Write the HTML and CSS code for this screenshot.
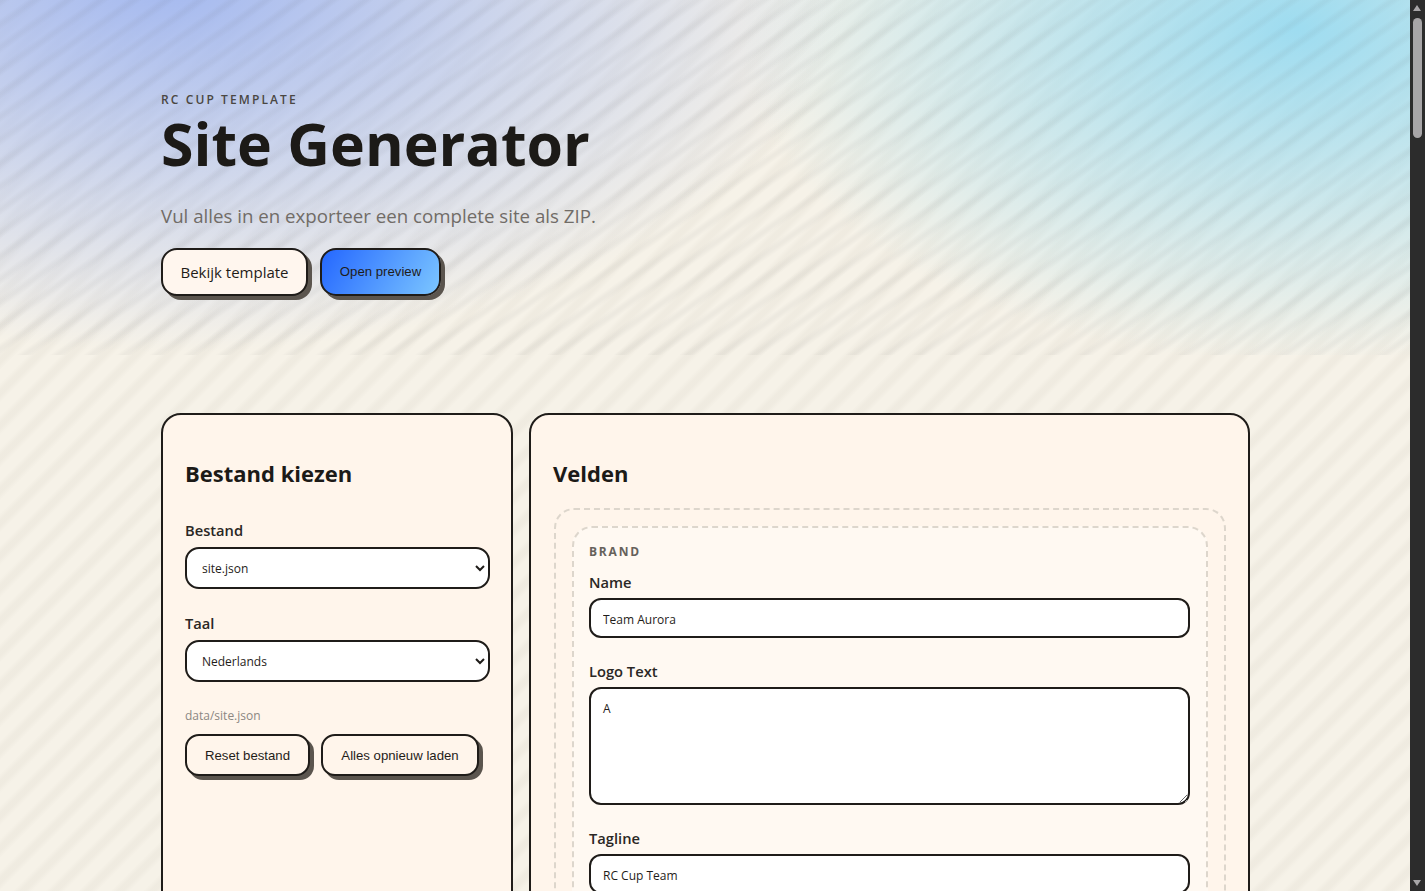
FILE: index.html
```html
<!DOCTYPE html>
<html lang="nl">
<head>
<meta charset="utf-8">
<title>Site Generator</title>
<link rel="stylesheet" href="styles.css">
</head>
<body>
<div class="viewport">
  <main class="page">
    <header class="hero">
      <div class="hero-inner">
        <p class="eyebrow">RC CUP TEMPLATE</p>
        <h1>Site Generator</h1>
        <p class="lead">Vul alles in en exporteer een complete site als ZIP.</p>
        <div class="actions">
          <a class="btn btn-link" href="#">Bekijk template</a>
          <button class="btn btn-primary" type="button">Open preview</button>
        </div>
      </div>
    </header>
    <div class="layout">
      <section class="card">
        <h2>Bestand kiezen</h2>
        <label class="field">
          <span class="label">Bestand</span>
          <select class="control select"><option>site.json</option></select>
        </label>
        <label class="field">
          <span class="label">Taal</span>
          <select class="control select"><option>Nederlands</option></select>
        </label>
        <p class="path">data/site.json</p>
        <div class="tools">
          <button class="btn btn-small" type="button">Reset bestand</button>
          <button class="btn btn-small" type="button">Alles opnieuw laden</button>
        </div>
      </section>
      <section class="card">
        <h2>Velden</h2>
        <div class="group-outer">
          <div class="group-inner">
            <p class="group-title">BRAND</p>
            <label class="field-wide">
              <span class="label">Name</span>
              <input class="control input" type="text" value="Team Aurora">
            </label>
            <label class="field-wide">
              <span class="label">Logo Text</span>
              <textarea class="control area">A</textarea>
            </label>
            <label class="field-wide">
              <span class="label">Tagline</span>
              <input class="control input" type="text" value="RC Cup Team">
            </label>
          </div>
        </div>
      </section>
    </div>
  </main>
  <aside class="scrollbar" aria-hidden="true">
    <span class="arrow arrow-up"></span>
    <span class="thumb"></span>
    <span class="arrow arrow-down"></span>
  </aside>
</div>
</body>
</html>
```
FILE: styles.css
```css
* { box-sizing: border-box; }
html, body { margin: 0; height: 100%; overflow: hidden; }
body {
  font-family: "Open Sans", "Noto Sans", sans-serif;
  color: #1c1a17;
}
.viewport { display: flex; height: 891px; overflow: hidden; }
.page {
  flex: 1;
  min-width: 0;
  height: 891px;
  overflow: hidden;
  background-color: #f6f2e8;
  background-image: repeating-linear-gradient(135deg,
    rgba(120,110,90,.05) 0,
    rgba(120,110,90,.05) 4px,
    rgba(120,110,90,0) 9px,
    rgba(120,110,90,0) 18px,
    rgba(120,110,90,.05) 23px);
}
.hero {
  height: 355px;
  padding: 92px 161px 0;
  background-image:
    repeating-linear-gradient(145deg,
      rgba(90,90,90,.06) 0,
      rgba(90,90,90,.06) 2px,
      rgba(90,90,90,0) 6px,
      rgba(90,90,90,0) 15px,
      rgba(90,90,90,.06) 19px),
    radial-gradient(ellipse 680px 370px at 12% -5%, rgba(160,182,240,.95), rgba(160,182,240,0) 100%),
    radial-gradient(ellipse 560px 335px at 92% 8%, rgba(158,220,240,1), rgba(158,220,240,0) 100%);
}
.eyebrow {
  margin: 0;
  font-size: 12px;
  line-height: 16px;
  font-weight: 600;
  letter-spacing: 2.1px;
  color: #4a4742;
}
h1 {
  margin: 3px 0 0;
  font-size: 59px;
  line-height: 64px;
  font-weight: 700;
  letter-spacing: 0;
  color: #1c1a17;
}
.lead {
  margin: 28px 0 0;
  font-size: 18.7px;
  line-height: 26px;
  color: #716c67;
}
.actions { display: flex; gap: 12px; margin-top: 19px; }
.btn {
  display: inline-flex;
  align-items: center;
  justify-content: center;
  height: 48px;
  border: 2px solid #1f1c19;
  border-radius: 16px;
  box-shadow: 4px 4px 0 #5b554e;
  color: #1f1c19;
  text-decoration: none;
  cursor: pointer;
}
.btn-link { width: 147px; background: #fff6ee; font-size: 15px; }
.btn-primary {
  width: 121px;
  padding: 0 0 2px;
  background: linear-gradient(120deg, #2467ff, #7cc6ff);
  font-family: "Liberation Sans", sans-serif;
  font-size: 13.2px;
}
.layout {
  display: grid;
  grid-template-columns: 352px 721px;
  gap: 16px;
  padding: 58px 0 0 161px;
}
.card {
  min-height: 760px;
  padding: 43px 22px 22px;
  border: 2px solid #1f1c19;
  border-radius: 20px;
  background: #fff5eb;
}
h2 {
  margin: 0;
  font-size: 22px;
  line-height: 30px;
  font-weight: 700;
}
.field { display: block; margin-top: 32px; }
.field + .field { margin-top: 24px; }
.label {
  display: block;
  font-size: 14.7px;
  font-weight: 600;
  line-height: 20px;
  color: #2a2724;
}
.control {
  display: block;
  width: 100%;
  border: 2px solid #1f1c19;
  background: #fff;
  font-family: "Open Sans", "Noto Sans", sans-serif;
  font-size: 12px;
  color: #1f1c19;
}
.select {
  width: 305px;
  height: 42px;
  margin-top: 7px;
  padding: 0 11px;
  border-radius: 14px;
}
.path {
  margin: 25px 0 0;
  font-size: 12px;
  line-height: 18px;
  color: #8c8782;
}
.tools { display: flex; gap: 11px; margin-top: 9px; }
.btn-small {
  height: 42px;
  border-radius: 14px;
  background: #fff5eb;
  font-family: "Liberation Sans", sans-serif;
  font-size: 13.2px;
}
.tools .btn-small:first-child { width: 125px; }
.tools .btn-small:last-child { width: 158px; }
.group-outer {
  margin: 20px 0 0 1px;
  padding: 16px;
  border: 2px dashed #ddd6cc;
  border-radius: 20px;
}
.group-inner {
  padding: 16px 16px 16px 15px;
  border: 2px dashed #ddd6cc;
  border-radius: 20px;
  background: #fff9f2;
}
.group-title {
  margin: 0;
  font-size: 12px;
  line-height: 16px;
  font-weight: 700;
  letter-spacing: 1.8px;
  color: #66615b;
}
.field-wide { display: block; margin-top: 23px; }
.group-title + .field-wide { margin-top: 12px; }
.input {
  height: 40px;
  margin-top: 6px;
  padding: 2px 12px 0;
  border-radius: 12px;
}
.area {
  height: 118px;
  margin-top: 6px;
  margin-bottom: 23px;
  padding: 11px 12px;
  border-radius: 12px;
  resize: vertical;
}
.field-wide:has(.area) + .field-wide { margin-top: 0; }
.scrollbar {
  position: relative;
  flex: 0 0 15px;
  background: #2c2c2c;
}
.thumb {
  position: absolute;
  left: 3px;
  top: 18px;
  width: 9px;
  height: 120px;
  border-radius: 5px;
  background: #a8a6a8;
}
.arrow {
  position: absolute;
  left: 3px;
  width: 0;
  height: 0;
  border-left: 4.5px solid transparent;
  border-right: 4.5px solid transparent;
}
.arrow-up { top: 5px; border-bottom: 6px solid #a8a6a8; }
.arrow-down { bottom: 5px; border-top: 6px solid #a8a6a8; }
```
